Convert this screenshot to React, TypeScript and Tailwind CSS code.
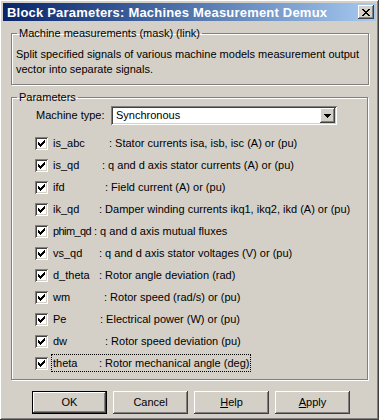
import { useState } from "react";

type Row = {
  name: string;
  desc: string;
  nameW: string;
};

const rows: Row[] = [
  { name: "is_abc", desc: ": Stator currents isa, isb, isc (A) or (pu)", nameW: "w-[57px]" },
  { name: "is_qd", desc: ": q and d axis stator currents (A) or (pu)", nameW: "w-[50px]" },
  { name: "ifd", desc: ": Field current (A) or (pu)", nameW: "w-[53px]" },
  { name: "ik_qd", desc: ": Damper winding currents ikq1, ikq2, ikd (A) or (pu)", nameW: "w-[47px]" },
  { name: "phim_qd", desc: ": q and d axis mutual fluxes", nameW: "w-[42px] tracking-[-0.6px]" },
  { name: "vs_qd", desc: ": q and d axis stator voltages (V) or (pu)", nameW: "w-[47px]" },
  { name: "d_theta", desc: ": Rotor angle deviation (rad)", nameW: "w-[47px]" },
  { name: "wm", desc: ": Rotor speed (rad/s) or (pu)", nameW: "w-[52px]" },
  { name: "Pe", desc: ": Electrical power (W) or (pu)", nameW: "w-[48px]" },
  { name: "dw", desc: ": Rotor speed deviation (pu)", nameW: "w-[53px]" },
  { name: "theta", desc: ": Rotor mechanical angle (deg)", nameW: "w-[47px]" },
];

const raised =
  "shadow-[inset_-1px_-1px_#404040,inset_1px_1px_#fff,inset_-2px_-2px_#808080,inset_2px_2px_#d4d0c8]";
const sunken =
  "shadow-[inset_1px_1px_#808080,inset_-1px_-1px_#fff,inset_2px_2px_#404040,inset_-2px_-2px_#d4d0c8]";

const CheckBox = ({ checked, onClick }: { checked: boolean; onClick: () => void }) => (
  <button
    type="button"
    onClick={onClick}
    className={`w-[13px] h-[13px] bg-white shrink-0 flex items-center justify-center ${sunken}`}
  >
    {checked && (
      <svg width="7" height="7" viewBox="0 0 7 7">
        <path d="M0 2h1v1h1v1h1v-1h1v-1h1v-1h1v-1h1v3h-1v1h-1v1h-1v1h-1v1h-1v-1h-1v-1h-1v-1h-1z" fill="#000" />
      </svg>
    )}
  </button>
);

const WinButton = ({ children, isDefault }: { children: React.ReactNode; isDefault?: boolean }) => (
  <button
    type="button"
    className={`w-[75px] h-[23px] bg-[#d4d0c8] text-black flex items-center justify-center ${
      isDefault
        ? "border border-black shadow-[inset_-1px_-1px_#404040,inset_1px_1px_#fff,inset_-2px_-2px_#808080]"
        : raised
    }`}
  >
    {children}
  </button>
);

const App = () => {
  const [checks, setChecks] = useState<boolean[]>(rows.map(() => true));

  function toggle(i: number): void {
    setChecks((prev) => prev.map((c, j) => (j === i ? !c : c)));
  }

  return (
    <div
      className={`w-[379px] h-[420px] bg-[#d4d0c8] p-[3px] text-[11px] text-black leading-[13px] font-['Liberation_Sans',Arial,sans-serif] ${raised}`}
    >
      {/* title bar */}
      <div className="h-[18px] bg-gradient-to-r from-[#0a246a] to-[#a6caf0] flex items-center justify-between pl-[4px] pr-[2px]">
        <span className="text-white font-bold text-[13px] tracking-[0.2px]">
          Block Parameters: Machines Measurement Demux
        </span>
        <button type="button" className={`w-[16px] h-[14px] bg-[#d4d0c8] flex items-center justify-center ${raised}`}>
          <svg width="8" height="7" viewBox="0 0 8 7">
            <path d="M0 0h2v1h1v1h2v-1h1v-1h2v1h-1v1h-1v1h-1v1h1v1h1v1h1v1h-2v-1h-1v-1h-2v1h-1v1h-2v-1h1v-1h1v-1h1v-1h-1v-1h-1v-1h-1z" fill="#000" />
          </svg>
        </button>
      </div>

      <fieldset className="ml-[8px] mt-[6px] w-[358px] border border-[#808080] shadow-[inset_1px_1px_#fff,1px_1px_#fff] pb-[7px]">
        <legend className="ml-[5px] px-[2px]">Machine measurements (mask) (link)</legend>
        <p className="pl-[4px] pt-[7px] pr-[8px] leading-[15px]">
          Split specified signals of various machine models measurement output vector into separate signals.
        </p>
      </fieldset>

      <fieldset className="ml-[8px] mt-[6px] w-[357px] border border-[#808080] shadow-[inset_1px_1px_#fff,1px_1px_#fff] pb-[5px]">
        <legend className="ml-[5px] px-[2px]">Parameters</legend>
        <div className="flex items-center pl-[24px] pt-[2px]">
          <span className="w-[75px]">Machine type:</span>
          <div className={`w-[226px] h-[19px] bg-white flex items-center justify-between p-[2px] ${sunken}`}>
            <span className="pl-[3px]">Synchronous</span>
            <span className={`w-[15px] h-[15px] bg-[#d4d0c8] flex items-center justify-center ${raised}`}>
              <svg width="7" height="4" viewBox="0 0 7 4">
                <path d="M0 0h7v1h-1v1h-1v1h-1v1h-1v-1h-1v-1h-1v-1h-1z" fill="#000" />
              </svg>
            </span>
          </div>
        </div>
        <div className="flex flex-col pl-[23px] pt-[7px]">
          {rows.map((r, i) => (
            <div key={r.name} className="h-[22px] flex items-center">
              <CheckBox checked={checks[i]} onClick={() => toggle(i)} />
              <span
                className={`ml-[4px] h-[16px] flex items-center whitespace-pre ${
                  r.name === "theta" ? "outline outline-1 outline-dotted outline-black" : ""
                }`}
              >
                <span className={`${r.nameW} shrink-0 pl-[1px]`}>{r.name}</span>
                <span className="pr-[1px]">{r.desc}</span>
              </span>
            </div>
          ))}
        </div>
      </fieldset>

      <div className="flex gap-[6px] pl-[29px] mt-[11px]">
        <WinButton isDefault>OK</WinButton>
        <WinButton>Cancel</WinButton>
        <WinButton>
          <span>
            <span className="underline">H</span>elp
          </span>
        </WinButton>
        <WinButton>
          <span>
            <span className="underline">A</span>pply
          </span>
        </WinButton>
      </div>
    </div>
  );
};

export default App;
